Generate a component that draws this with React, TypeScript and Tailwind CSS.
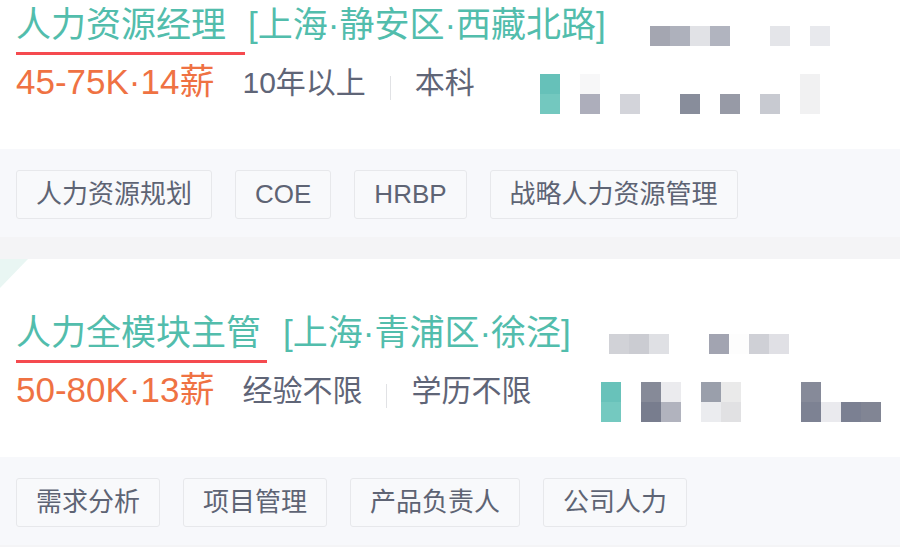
import React from "react";

type Cell = string | null;

type Job = {
    title: string;
    lineW: string;
    location: string;
    mosaicTopMl: string;
    salary: string;
    exp: string;
    edu: string;
    mosaicBottomMl: string;
    tags: string[];
    mosaicTop: Cell[][];
    mosaicBottom: Cell[][];
    corner?: boolean;
};

const jobs: Job[] = [
    {
        title: "人力资源经理",
        lineW: "w-[229px]",
        location: "[上海·静安区·西藏北路]",
        mosaicTopMl: "ml-[44px]",
        salary: "45-75K·14薪",
        exp: "10年以上",
        edu: "本科",
        mosaicBottomMl: "ml-[65px]",
        tags: ["人力资源规划", "COE", "HRBP", "战略人力资源管理"],
        mosaicTop: [
            ["bg-[#a4a6b1]", "bg-[#aeb1bc]", "bg-[#e1e2e6]", "bg-[#b1b4bf]", null, null, "bg-[#e4e5e9]", null, "bg-[#e8e9ed]"],
        ],
        mosaicBottom: [
            ["bg-[#66c1b9]", null, "bg-[#f7f7f8]", null, null, null, null, null, null, null, null, null, null, "bg-[#f1f1f2]"],
            ["bg-[#73c8bf]", null, "bg-[#adaebb]", null, "bg-[#d3d4da]", null, null, "bg-[#888d9b]", null, "bg-[#979aa6]", null, "bg-[#c8cad1]", null, "bg-[#f1f1f2]"],
        ],
    },
    {
        title: "人力全模块主管",
        lineW: "w-[251px]",
        location: "[上海·青浦区·徐泾]",
        mosaicTopMl: "ml-[38px]",
        salary: "50-80K·13薪",
        exp: "经验不限",
        edu: "学历不限",
        mosaicBottomMl: "ml-[70px]",
        tags: ["需求分析", "项目管理", "产品负责人", "公司人力"],
        mosaicTop: [
            ["bg-[#d1d2d7]", "bg-[#cbccd2]", "bg-[#dfe0e4]", null, null, "bg-[#a2a4b1]", "bg-[#fdfdfd]", "bg-[#cfd0d6]", "bg-[#e0e0e5]"],
        ],
        mosaicBottom: [
            ["bg-[#68c2ba]", null, "bg-[#868a98]", "bg-[#ebebee]", null, "bg-[#9a9fab]", "bg-[#eaeaea]", null, null, null, "bg-[#868a99]"],
            ["bg-[#74c9c0]", null, "bg-[#787d8e]", "bg-[#b1b3be]", null, "bg-[#ebecef]", "bg-[#e1e1e3]", null, null, null, "bg-[#7d8293]", "bg-[#eaeaee]", "bg-[#7b8092]", "bg-[#818594]"],
        ],
        corner: true,
    },
];

// 打码区块（公司信息被马赛克处理）
function Mosaic({ rows, className }: { rows: Cell[][]; className: string }) {
    return (
        <div className={`flex flex-col shrink-0 ${className}`}>
            {rows.map((row, i) => (
                <div key={i} className="flex">
                    {row.map((c, j) => (
                        <div key={j} className={`w-5 h-5 ${c ?? ""}`} />
                    ))}
                </div>
            ))}
        </div>
    );
}

function JobCard({ job }: { job: Job }) {
    return (
        <div className="relative bg-white">
            {job.corner && (
                <svg className="absolute left-0 top-0" width="28" height="29" viewBox="0 0 28 29">
                    <polygon points="0,0 28,0 0,29" fill="#e9f6f3" />
                </svg>
            )}

            <div className="px-4 pt-[52px] pb-[35px]">
                <div className="flex items-start">
                    <span className="text-[35px] leading-[44px] text-[#52bdac] whitespace-nowrap">{job.title}</span>
                    <span className="ml-[22px] text-[35px] leading-[44px] text-[#52bdac] whitespace-nowrap">{job.location}</span>
                    <Mosaic rows={job.mosaicTop} className={`mt-[23px] ${job.mosaicTopMl}`} />
                </div>

                <div className={`mt-[5px] h-[3px] bg-[#f54a4f] ${job.lineW}`} />

                <div className="mt-[5px] flex items-start">
                    <span className="text-[35px] leading-[44px] text-[#ef7243] whitespace-nowrap">{job.salary}</span>
                    <span className="ml-[28px] mt-[1px] text-[30px] leading-[44px] text-[#5f6577] whitespace-nowrap">{job.exp}</span>
                    <span className="mx-[24px] mt-[16px] w-px h-[24px] bg-[#e1e2e5]" />
                    <span className="mt-[1px] text-[30px] leading-[44px] text-[#5f6577] whitespace-nowrap">{job.edu}</span>
                    <Mosaic rows={job.mosaicBottom} className={`mt-[14px] ${job.mosaicBottomMl}`} />
                </div>
            </div>

            <div className="bg-[#f7f8fb] px-4 pt-[21px] pb-[18px] flex gap-[23px]">
                {job.tags.map((t) => (
                    <span
                        key={t}
                        className="h-[49px] px-[19px] flex items-center rounded-[3px] border border-[#e7e8eb] bg-[#f8f9fb] text-[26px] text-[#5e6474] whitespace-nowrap"
                    >
                        {t}
                    </span>
                ))}
            </div>
        </div>
    );
}

export default function App() {
    return (
        <div
            className="w-[900px] h-[547px] overflow-hidden bg-[#f4f4f6]"
            style={{ fontFamily: '"Liberation Sans", "Noto Sans CJK SC", sans-serif' }}
        >
            <div className="-mt-[49px] flex flex-col gap-[22px]">
                {jobs.map((j) => (
                    <JobCard key={j.title} job={j} />
                ))}
            </div>
        </div>
    );
}
